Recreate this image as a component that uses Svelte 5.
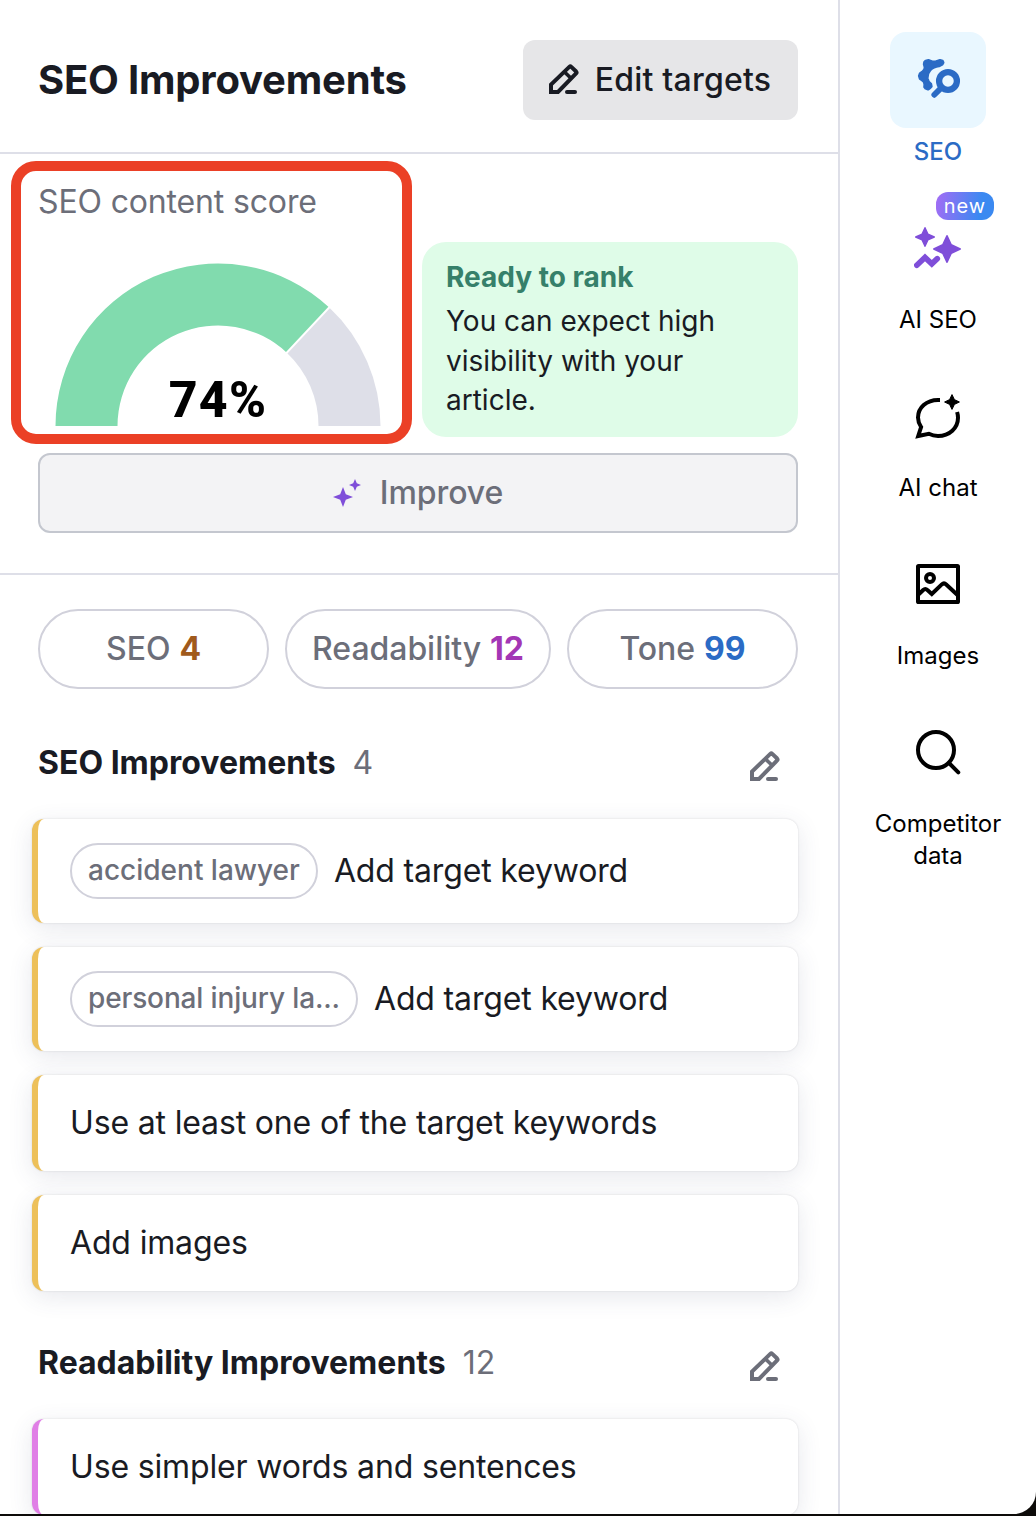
<script>
  const tabs = [
    { label: 'SEO', count: 4, tone: 'brown' },
    { label: 'Readability', count: 12, tone: 'magenta' },
    { label: 'Tone', count: 99, tone: 'blue' }
  ];

  const sections = [
    {
      title: 'SEO Improvements',
      count: 4,
      accent: 'amber',
      cards: [
        { chip: 'accident lawyer', text: 'Add target keyword' },
        { chip: 'personal injury la...', text: 'Add target keyword', tight: true },
        { text: 'Use at least one of the target keywords' },
        { text: 'Add images' }
      ]
    },
    {
      title: 'Readability Improvements',
      count: 12,
      accent: 'pink',
      cards: [{ text: 'Use simpler words and sentences' }]
    }
  ];

  const nav = [
    { id: 'seo', label: 'SEO', active: true },
    { id: 'aiseo', label: 'AI SEO', badge: 'new' },
    { id: 'chat', label: 'AI chat' },
    { id: 'images', label: 'Images' },
    { id: 'search', label: 'Competitor data' }
  ];

  const score = 74;

  // Ring segment between two percentages of the half circle.
  function segment(from, to, outer, inner) {
    const at = (p, r) => {
      const a = Math.PI * (1 - p / 100);
      return `${163 + r * Math.cos(a)} ${163 - r * Math.sin(a)}`;
    };
    return `M${at(from, outer)}A${outer} ${outer} 0 0 1 ${at(to, outer)}L${at(to, inner)}A${inner} ${inner} 0 0 0 ${at(from, inner)}Z`;
  }
</script>

{#snippet pencil()}
  <svg class="pencil" viewBox="0 0 32 32" width="32" height="32" fill="none" stroke="currentColor" stroke-width="4">
    <path d="M3 29V21.6L21.3 3.9Q22.3 3 23.3 3.9L28.1 8.5Q29 9.5 28.1 10.5L10 29Z" />
    <path d="M16.5 9L23 15.3" stroke-width="3.6" />
    <path d="M19 29H27" stroke-linecap="round" />
  </svg>
{/snippet}

<div class="window">
  <main>
    <header>
      <h1>SEO Improvements</h1>
      <button class="edit">{@render pencil()}<span>Edit targets</span></button>
    </header>

    <section class="score">
      <div class="highlight"></div>
      <p class="caption">SEO content score</p>
      <div class="score-row">
        <div class="gauge">
          <svg viewBox="0 0 326 163" width="326" height="163">
            <path d={segment(0, score, 162.5, 100.5)} fill="#81dbae" />
            <path d={segment(score, 100, 162.5, 100.5)} fill="#dedfe8" />
            <path d="M231 90.5L276 42.5" stroke="#fff" stroke-width="2" />
          </svg>
          <strong>{score}%</strong>
        </div>
        <div class="verdict">
          <b>Ready to rank</b>
          <p>You can expect high visibility with your article.</p>
        </div>
      </div>
      <button class="improve">
        <svg viewBox="0 0 32 32" width="32" height="32" fill="#7f4ed9">
          <path d="M11 10L13.8 17.2L21 20L13.8 22.8L11 30L8.2 22.8L1 20L8.2 17.2Z" />
          <path d="M23 2L24.8 6.2L29 8L24.8 9.8L23 14L21.2 9.8L17 8L21.2 6.2Z" />
        </svg>
        <span>Improve</span>
      </button>
    </section>

    <div class="tabs">
      {#each tabs as tab}
        <button class="tab">{tab.label} <b class={tab.tone}>{tab.count}</b></button>
      {/each}
    </div>

    {#each sections as s}
      <section class="group">
        <div class="group-head">
          <h2>{s.title}</h2>
          <span class="count">{s.count}</span>
          {@render pencil()}
        </div>
        <div class="cards">
          {#each s.cards as card}
            <div class="card {s.accent}" class:tall={card.chip}>
              {#if card.chip}<span class="chip" class:tight={card.tight}>{card.chip}</span>{/if}
              <span class="text">{card.text}</span>
            </div>
          {/each}
        </div>
      </section>
    {/each}
  </main>

  <nav>
    {#each nav as item}
      <div class="item" class:active={item.active}>
        <div class="tile">
          {#if item.badge}<span class="badge">{item.badge}</span>{/if}
          <svg viewBox="0 0 48 48" width="48" height="48" fill="none" stroke="currentColor" stroke-width="4">
            {#if item.id === 'seo'}
              <path fill="currentColor" stroke-width="2.4" stroke-linejoin="round" d="M10.4 6L11.6 4.8L14.4 4.2L17 5.2Q20 6.4 23 5.2L26 4.2L28.6 5L29.3 6.6L28.3 8.4L25 10.1Q19.6 10.6 16.2 14.2Q13 17.8 13.4 22.2Q13.8 25.6 17 28L17.5 30.4L16.1 32L14 33.4L11.6 32.5L10.4 31L10.6 28.3Q10.4 25.4 8.2 24.4L6 22.8L5.1 20L6 17.4L8.7 15.4Q11 13.6 10.8 11.2L10 8.2Z" />
              <circle cx="34" cy="25" r="8.9" stroke-width="6.3" />
              <path d="M27.5 31.6L20.3 38.8" stroke-width="5.8" stroke-linecap="round" />
            {:else if item.id === 'aiseo'}
              <g class="violet">
                <path fill="currentColor" stroke-width="1.4" stroke-linejoin="round" d="M11 3.7L13.9 10.1L20.3 13L13.9 15.9L11 22.3L8.1 15.9L1.7 13L8.1 10.1Z" />
                <path fill="currentColor" stroke-width="1.6" stroke-linejoin="round" d="M33 11.8L37.2 20.8L46.2 25L37.2 29.2L33 38.2L28.8 29.2L19.8 25L28.8 20.8Z" />
                <path stroke-width="5.6" stroke-linecap="round" d="M2.8 41.2L11 33.4L17.8 39.8L23.3 34.6" />
              </g>
            {:else if item.id === 'chat'}
              <path d="M26 8H24C12.5 8 4 15.7 4 25.5C4 29 5 31.8 7.1 35L4.2 44L14.8 41.8C17.8 43.3 20.7 44 24 44C35.5 44 44 36 44 25.8C44 23.8 43.8 22.2 43.1 20" />
              <path fill="currentColor" stroke-width="1" stroke-linejoin="round" d="M38 2.6L40.4 7.6L45.4 10L40.4 12.4L38 17.4L35.6 12.4L30.6 10L35.6 7.6Z" />
            {:else if item.id === 'images'}
              <rect x="4" y="6" width="40" height="36" rx=".6" />
              <circle cx="16" cy="18" r="4" />
              <path d="M4.5 34.5L9.2 30Q11.3 28 13.4 30L17.8 34L27.8 24.4Q30 22.4 32.2 24.4L43.5 35" />
            {:else}
              <circle cx="22" cy="22" r="18" />
              <path d="M35 35L44.3 44.3" stroke-linecap="round" />
            {/if}
          </svg>
        </div>
        <span class="label">{item.label}</span>
      </div>
    {/each}
  </nav>
</div>

<style>
  :global(body) {
    background: #0d0b09;
    overflow: hidden;
  }
  * {
    box-sizing: border-box;
    margin: 0;
  }
  .window {
    display: flex;
    width: 1036px;
    height: 1514px;
    overflow: hidden;
    background: #fff;
    border-bottom-right-radius: 22px;
    font-family: Inter, 'Liberation Sans', sans-serif;
    color: #191b23;
  }
  svg {
    display: block;
    flex: none;
  }
  button {
    font: inherit;
    display: flex;
    align-items: center;
    justify-content: center;
    padding: 0;
  }
  main {
    width: 840px;
    border-right: 2px solid #dedfe8;
    flex: none;
  }
  header {
    display: flex;
    align-items: center;
    justify-content: space-between;
    height: 154px;
    padding: 8px 40px 0 38px;
    border-bottom: 2px solid #dedfe8;
  }
  h1 {
    font-size: 40px;
    font-weight: 650;
    line-height: 48px;
    letter-spacing: -0.2px;
  }
  .edit {
    width: 275px;
    height: 80px;
    gap: 15px;
    padding: 0 2px 2px 0;
    border: 0;
    border-radius: 12px;
    background: #e6e6e8;
    color: #191b23;
    font-size: 32px;
    font-weight: 500;
    letter-spacing: 0.2px;
  }
  .score {
    position: relative;
    height: 421px;
    padding: 24px 40px 0 38px;
    border-bottom: 2px solid #dedfe8;
  }
  .highlight {
    position: absolute;
    left: 11px;
    top: 7px;
    width: 401px;
    height: 283px;
    border: 10px solid #eb4026;
    border-radius: 25px;
  }
  .caption {
    font-size: 32px;
    line-height: 48px;
    letter-spacing: -0.15px;
    color: #6c6e79;
  }
  .score-row {
    display: flex;
    justify-content: space-between;
    margin-top: 16px;
    height: 195px;
  }
  .gauge {
    display: grid;
    width: 326px;
    height: 163px;
    margin: 21px 0 0 17px;
  }
  .gauge > * {
    grid-area: 1 / 1;
  }
  .gauge strong {
    align-self: end;
    justify-self: center;
    color: #000;
    font-family: Roboto, Inter, sans-serif;
    font-size: 50px;
    font-weight: 800;
    line-height: 51px;
    letter-spacing: 1.2px;
  }
  .verdict {
    width: 376px;
    padding: 16px 24px;
    border-radius: 24px;
    background: #dffce8;
    font-size: 28px;
    line-height: 39.8px;
  }
  .verdict b {
    display: block;
    margin-bottom: 4px;
    color: #36806a;
    font-weight: 700;
  }
  .improve {
    width: 100%;
    height: 80px;
    margin-top: 16px;
    padding: 0 1px 2px 0;
    gap: 16px;
    border: 2px solid #c4c7cf;
    border-radius: 12px;
    background: #f3f3f5;
    color: #6c6e79;
    font-size: 32px;
    font-weight: 500;
    letter-spacing: -0.1px;
  }
  .improve svg {
    margin-top: 2px;
  }
  .tabs {
    display: grid;
    grid-template-columns: 231px 266px 231px;
    gap: 16px;
    padding: 34px 40px 0 38px;
  }
  .tab {
    height: 80px;
    gap: 9px;
    padding-bottom: 2px;
    border: 2px solid #d1d1db;
    border-radius: 40px;
    background: #fff;
    color: #6c6e79;
    font-size: 32px;
    font-weight: 500;
    letter-spacing: -0.05px;
  }
  .tab b {
    font-weight: 700;
  }
  .brown {
    color: #a05a1c;
  }
  .magenta {
    color: #a336b5;
  }
  .blue {
    color: #2b6bc5;
  }
  .group {
    padding: 48px 40px 0 32px;
  }
  .tabs + .group {
    padding-top: 50px;
  }
  .group-head {
    display: flex;
    align-items: center;
    height: 48px;
    padding: 0 17px 2px 6px;
    font-size: 32px;
  }
  h2 {
    font-size: 32px;
    font-weight: 700;
  }
  .count {
    margin-left: 17px;
    color: #6c6e79;
  }
  .group-head .pencil {
    margin: 8px 0 0 auto;
    color: #6c6e79;
  }
  .cards {
    display: grid;
    gap: 24px;
    margin-top: 32px;
  }
  .card {
    display: flex;
    align-items: center;
    gap: 16px;
    height: 96px;
    padding-left: 32px;
    border-left: 6px solid;
    border-radius: 12px;
    background: #fff;
    box-shadow: 0 0 2px rgba(25, 27, 35, 0.16), 0 6px 24px rgba(60, 65, 110, 0.12);
    font-size: 32px;
    letter-spacing: -0.155px;
  }
  .text {
    padding-bottom: 2px;
  }
  .card.tall {
    height: 104px;
  }
  .amber {
    border-color: #edc05a;
  }
  .pink {
    border-color: #e07fe6;
  }
  .chip {
    height: 56px;
    padding: 0 16px;
    border: 2px solid #d1d1db;
    border-radius: 28px;
    color: #6c6e79;
    font-size: 28px;
    font-weight: 500;
    line-height: 51px;
    letter-spacing: 0;
  }
  .chip.tight {
    letter-spacing: -0.14px;
  }
  nav {
    flex: 1;
    padding-top: 32px;
    color: #000;
  }
  .item {
    display: flex;
    flex-direction: column;
    align-items: center;
    min-height: 168px;
    gap: 8px;
  }
  .tile {
    position: relative;
    display: grid;
    place-items: center;
    width: 96px;
    height: 96px;
    border-radius: 16px;
  }
  .active {
    color: #2b6bc5;
  }
  .active .tile {
    background: #e9f7ff;
  }
  .active .label {
    font-weight: 500;
  }
  .violet {
    color: #7f4ed9;
  }
  .badge {
    position: absolute;
    left: 46px;
    top: -8px;
    width: 58px;
    height: 28px;
    border-radius: 12px;
    background: linear-gradient(100deg, #a46cf5, #3b89f1 75%);
    color: #fff;
    font-size: 20px;
    line-height: 28px;
    letter-spacing: 1px;
    text-align: center;
  }
  .label {
    width: 140px;
    font-size: 24px;
    line-height: 32px;
    text-align: center;
  }
</style>
